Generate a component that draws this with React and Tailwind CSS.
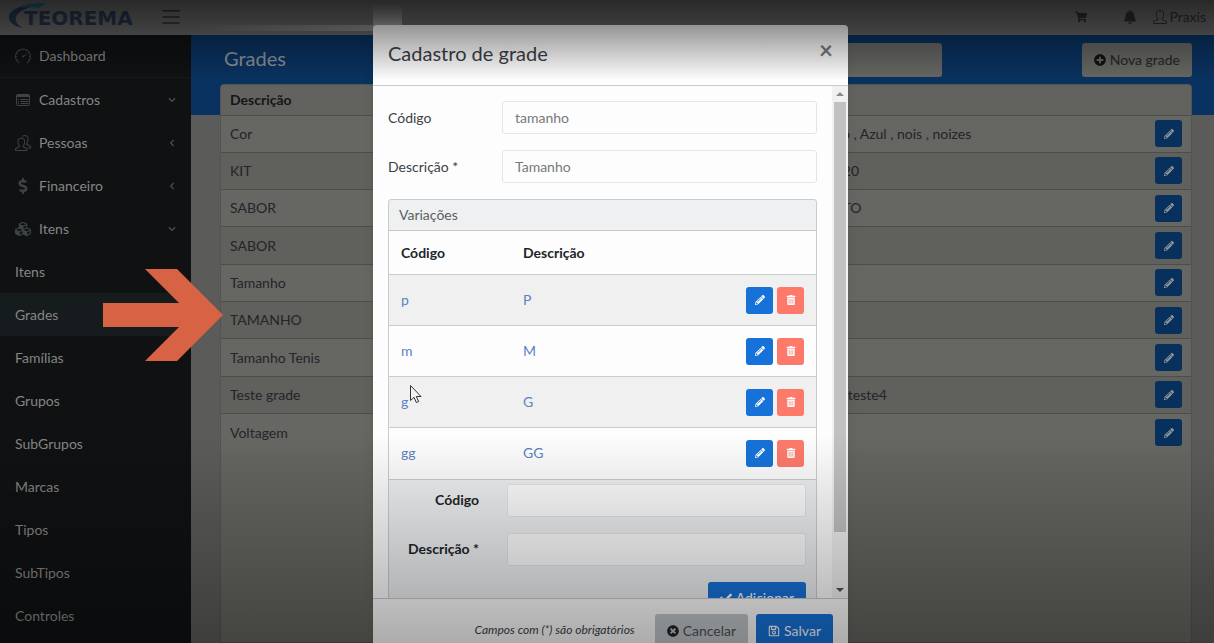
import { useState } from "react";
import {
  FaBell,
  FaCheck,
  FaChevronDown,
  FaChevronLeft,
  FaCubes,
  FaDollarSign,
  FaPencilAlt,
  FaPlusCircle,
  FaRegSave,
  FaShoppingCart,
  FaTimesCircle,
  FaTrashAlt,
} from "react-icons/fa";
import { SlMenu, SlPeople, SlSpeedometer, SlUser } from "react-icons/sl";

const ListIcon = ({ className }) => (
  <svg className={className} viewBox="0 0 16 16" fill="none" stroke="currentColor" aria-hidden="true">
    <rect x="1.500" y="2.500" width="13" height="11" rx="1" />
    <path d="M1.500 4h13" strokeWidth="2" />
    <path d="M3 7.500h1M3 9.500h1M3 11.500h1M5.500 7.500h8M5.500 9.500h8M5.500 11.500h8" />
  </svg>
);

const menu = [
  { label: "Dashboard", icon: SlSpeedometer },
  { label: "Cadastros", icon: ListIcon, arrow: "down" },
  { label: "Pessoas", icon: SlPeople, arrow: "left" },
  { label: "Financeiro", icon: FaDollarSign, arrow: "left" },
  { label: "Itens", icon: FaCubes, arrow: "down" },
];

const subMenu = [
  "Itens",
  "Grades",
  "Famílias",
  "Grupos",
  "SubGrupos",
  "Marcas",
  "Tipos",
  "SubTipos",
  "Controles",
];

const grades = [
  { name: "Cor", values: "Preto , Branco , Azul , nois , noizes" },
  { name: "KIT", values: "10 , 12 , 14 , 20" },
  { name: "SABOR", values: "LIMAO , MISTO" },
  { name: "SABOR", values: "" },
  { name: "Tamanho", values: "" },
  { name: "TAMANHO", values: "" },
  { name: "Tamanho Tenis", values: "" },
  { name: "Teste grade", values: "dois , teste3 , teste4" },
  { name: "Voltagem", values: "" },
];

const variations = [
  { code: "p", name: "P" },
  { code: "m", name: "M" },
  { code: "g", name: "G" },
  { code: "gg", name: "GG" },
];

const Logo = () => (
  <svg width="130" height="28" viewBox="0 0 130 28" role="img" aria-label="Teorema">
    <path
      d="M37 1C20 0 3 5 1 13c-1 6 5 10 14 12C8 21 6 17 9 12 13 6 24 3 37 1z"
      fill="#26344f"
    />
    <path d="M38 0C28-1 18 2 12 5c6-1 14-1 19 0z" fill="#1f5a78" />
    <text
      x="16"
      y="22"
      fontFamily="'DejaVu Sans', sans-serif"
      fontSize="20"
      fontWeight="bold"
      fill="#26344f"
    >
      TEOREMA
    </text>
  </svg>
);

const Sidebar = () => (
  <aside className="w-[191px] shrink-0 bg-[#0f1113] text-[#858584]">
    <nav>
      {menu.map(({ label, icon: Icon, arrow }) => (
        <a
          key={label}
          href="#"
          className="flex h-[43px] items-center px-[15px] first:border-b first:border-[#15191a]"
        >
          <Icon className="mr-2 size-4 text-[#3c4445]" />
          <span className="flex-1">{label}</span>
          {arrow === "down" && <FaChevronDown className="size-2 text-[#4c5152]" />}
          {arrow === "left" && <FaChevronLeft className="size-2 text-[#4c5152]" />}
        </a>
      ))}
      {subMenu.map((label) => (
        <a
          key={label}
          href="#"
          className={
            label === "Grades"
              ? "flex h-[43px] items-center bg-[#161b1d] pl-[15px]"
              : "flex h-[43px] items-center pl-[15px]"
          }
        >
          {label}
        </a>
      ))}
    </nav>
  </aside>
);

const GradesTable = () => (
  <div className="flex-1 overflow-hidden rounded-t border border-[#535352] bg-[#656561]">
    <table className="h-[366px] w-full text-left text-[#232527]">
      <thead>
        <tr className="h-[30px] bg-[#62625f] text-[#151617]">
          <th className="w-[542px] pl-[9px] font-bold">Descrição</th>
          <th></th>
          <th className="w-14"></th>
        </tr>
      </thead>
      <tbody>
        {grades.map((grade, i) => (
          <tr key={i} className="h-[37px] border-t border-[#4c4d4d] odd:bg-[#666663] even:bg-[#60605d]">
            <td className="pl-[9px]">{grade.name}</td>
            <td>{grade.values}</td>
            <td className="pr-[9px]">
              <button
                type="button"
                aria-label="Editar"
                className="ml-auto flex size-[27px] items-center justify-center rounded-[3px] bg-[#08305c] text-[#8f9699]"
              >
                <FaPencilAlt className="size-2.5" />
              </button>
            </td>
          </tr>
        ))}
      </tbody>
    </table>
  </div>
);

const GradeModal = () => {
  const [codigo, setCodigo] = useState("tamanho");
  const [descricao, setDescricao] = useState("Tamanho");

  return (
    <div
      role="dialog"
      aria-label="Cadastro de grade"
      className="flex w-[475px] flex-col overflow-hidden rounded-t bg-[#fdfdfd] text-[#3c4045] shadow-lg"
    >
      <div className="flex h-[61px] shrink-0 items-center justify-between border-b border-[#c6cbd0] px-[15px] pb-1">
        <h2 className="text-xl">Cadastro de grade</h2>
        <button type="button" aria-label="Fechar" className="pb-1.5 text-2xl font-bold leading-none text-[#7b7b7b]">
          ×
        </button>
      </div>

      <div className="flex h-[512px] shrink-0">
        <div className="flex-1 overflow-hidden px-[15px] pt-[15px]">
          <div className="mb-4 flex items-center">
            <label htmlFor="codigo" className="w-[114px]">
              Código
            </label>
            <input
              id="codigo"
              value={codigo}
              onChange={(e) => setCodigo(e.target.value)}
              className="h-[33px] flex-1 rounded-[3px] border border-[#e2e5e8] px-3 text-[#76797c]"
            />
          </div>
          <div className="mb-4 flex items-center">
            <label htmlFor="descricao" className="w-[114px]">
              Descrição *
            </label>
            <input
              id="descricao"
              value={descricao}
              onChange={(e) => setDescricao(e.target.value)}
              className="h-[33px] flex-1 rounded-[3px] border border-[#e2e5e8] px-3 text-[#76797c]"
            />
          </div>

          <div className="rounded-t-[3px] border border-[#c9cccf] bg-[#eef0f1]">
            <div className="flex h-[30px] items-center px-2.5 text-[#5b5f63]">Variações</div>
            <table className="w-full text-left">
              <thead>
                <tr className="h-11 border-t border-[#c4c7ca] bg-[#fdfdfd] text-[#212529]">
                  <th className="w-[122px] pl-3 font-bold">Código</th>
                  <th className="pl-3 font-bold">Descrição</th>
                  <th className="w-20"></th>
                </tr>
              </thead>
              <tbody>
                {variations.map((item) => (
                  <tr
                    key={item.code}
                    className="h-[51px] border-t border-[#c9cccf] text-[#5a82c4] odd:bg-[#f0f0f0] even:bg-[#fdfdfd]"
                  >
                    <td className="pl-3">{item.code}</td>
                    <td className="pl-3">{item.name}</td>
                    <td>
                      <div className="flex justify-end gap-1 pr-3 text-[#fdfdfd]">
                        <button
                          type="button"
                          aria-label="Editar"
                          className="flex size-[27px] items-center justify-center rounded-[3px] bg-[#1672d9]"
                        >
                          <FaPencilAlt className="size-2.5" />
                        </button>
                        <button
                          type="button"
                          aria-label="Excluir"
                          className="flex size-[27px] items-center justify-center rounded-[3px] bg-[#fd7a6b]"
                        >
                          <FaTrashAlt className="size-2.5" />
                        </button>
                      </div>
                    </td>
                  </tr>
                ))}
              </tbody>
            </table>

            <div className="flex flex-col gap-4 border-t border-[#c9cccf] px-2.5 pt-1 text-[#212529]">
              <div className="flex items-center">
                <label htmlFor="var-codigo" className="w-20 text-right font-bold">
                  Código
                </label>
                <input
                  id="var-codigo"
                  className="ml-7 h-[33px] flex-1 rounded-[3px] border border-[#e2e5e8] bg-[#fdfdfd] px-3"
                />
              </div>
              <div className="flex items-center">
                <label htmlFor="var-descricao" className="w-20 text-right font-bold">
                  Descrição *
                </label>
                <input
                  id="var-descricao"
                  className="ml-7 h-[33px] flex-1 rounded-[3px] border border-[#e2e5e8] bg-[#fdfdfd] px-3"
                />
              </div>
              <button
                type="button"
                className="flex h-[33px] items-center gap-1 self-end rounded-[3px] bg-[#1672d9] px-3 text-[#fdfdfd]"
              >
                <FaCheck className="size-3" />
                Adicionar
              </button>
            </div>
          </div>
        </div>

        <div className="flex w-4 flex-col items-center bg-[#f1f1f1]">
          <div className="flex h-4 items-center">
            <div className="border-x-4 border-b-4 border-transparent border-b-[#8b8b8b]" />
          </div>
          <div className="h-[430px] w-3 bg-[#c1c1c1]" />
          <div className="mt-auto flex h-4 items-center">
            <div className="border-x-4 border-t-4 border-transparent border-t-[#505050]" />
          </div>
        </div>
      </div>

      <div className="flex flex-1 items-start justify-end gap-2 border-t border-[#c6cbd0] px-[15px] pt-[15px]">
        <span className="mr-3 mt-2 text-xs italic leading-4">Campos com (*) são obrigatórios</span>
        <button
          type="button"
          className="flex h-[34px] items-center gap-1 rounded-[3px] bg-[#c2c6ca] px-3 text-[#4d5154]"
        >
          <FaTimesCircle className="size-3 text-[#212529]" />
          Cancelar
        </button>
        <button
          type="button"
          className="flex h-[34px] items-center gap-1 rounded-[3px] bg-[#1672d9] px-3 text-[#fdfdfd]"
        >
          <FaRegSave className="size-3" />
          Salvar
        </button>
      </div>
    </div>
  );
};

export default function App() {
  return (
    <div className="relative flex h-screen flex-col overflow-hidden bg-[#5b5b5a] font-['Lato','Noto_Sans',sans-serif] text-sm">
      <header className="flex h-[35px] shrink-0 items-center bg-[#666666] px-2 pb-0.5 text-[#2b2d2e]">
        <Logo />
        <button type="button" aria-label="Menu" className="ml-6">
          <SlMenu className="size-[18px]" />
        </button>
        <div className="ml-auto flex items-center">
          <FaShoppingCart className="mr-9 size-3" />
          <FaBell className="mr-4 size-3.5" />
          <SlUser className="mr-0.5 size-3.5" />
          <span>Praxis</span>
        </div>
      </header>

      <div className="flex min-h-0 flex-1">
        <Sidebar />
        <main className="flex flex-1 flex-col bg-[linear-gradient(#0a3260_80px,transparent_80px)] pl-[29px] pr-[22px]">
          <div className="flex h-[49px] shrink-0 items-center">
            <h1 className="w-[380px] pb-1 pl-1 text-xl text-[#8a9196]">Grades</h1>
            <input
              aria-label="Pesquisar"
              className="h-[34px] w-[342px] rounded-[3px] bg-[#666663] px-3"
            />
            <button
              type="button"
              className="ml-auto flex h-[34px] items-center gap-1 rounded-[3px] bg-[#666663] px-3 text-[#232527]"
            >
              <FaPlusCircle className="size-3 text-[#101112]" />
              Nova grade
            </button>
          </div>
          <GradesTable />
        </main>
      </div>

      {/* faint light streaks behind the dialog's corner */}
      <div className="absolute left-[200px] top-[25px] h-1.5 w-[173px] bg-linear-to-r from-transparent to-white/25" />
      <div className="absolute left-[373px] top-1 h-6 w-[29px] bg-linear-to-b from-transparent to-white/40" />

      <div className="absolute inset-0 flex justify-center pl-[7px] pt-[25px]">
        <GradeModal />
      </div>

      {/* shading at the top and bottom edges of the frame */}
      <div className="pointer-events-none absolute inset-x-0 top-0 h-20 bg-linear-to-b from-black/60 to-transparent" />
      <div className="pointer-events-none absolute inset-x-0 bottom-0 h-52 bg-linear-to-t from-black/32 to-transparent" />

      {/* pointer to the current menu item */}
      <svg className="pointer-events-none absolute left-[103px] top-[269px]" width="120" height="92" viewBox="0 0 120 92">
        <path d="M42 0h32l46 46-46 46H42l34-34H0V34h76z" fill="#d86244" />
      </svg>

      <svg className="pointer-events-none absolute left-[409px] top-[384px]" width="14" height="20" viewBox="0 0 14 20">
        <path
          d="M1.500 1.500v15l3.500-3.200 2.300 5.200 2.300-1-2.300-5h4.700z"
          fill="#f4f4f4"
          stroke="#333"
        />
      </svg>
    </div>
  );
}
